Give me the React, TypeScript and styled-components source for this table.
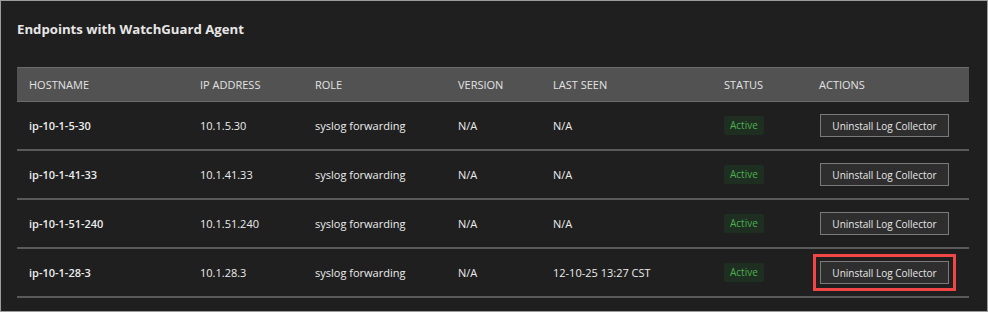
import styled, { createGlobalStyle } from 'styled-components';

type Endpoint = {
  hostname: string;
  ip: string;
  role: string;
  version: string;
  lastSeen: string;
  highlighted?: boolean;
};

const endpoints: Endpoint[] = [
  { hostname: 'ip-10-1-5-30', ip: '10.1.5.30', role: 'syslog forwarding', version: 'N/A', lastSeen: 'N/A' },
  { hostname: 'ip-10-1-41-33', ip: '10.1.41.33', role: 'syslog forwarding', version: 'N/A', lastSeen: 'N/A' },
  { hostname: 'ip-10-1-51-240', ip: '10.1.51.240', role: 'syslog forwarding', version: 'N/A', lastSeen: 'N/A' },
  {
    hostname: 'ip-10-1-28-3',
    ip: '10.1.28.3',
    role: 'syslog forwarding',
    version: 'N/A',
    lastSeen: '12-10-25 13:27 CST',
    highlighted: true,
  },
];

const columns = ['Hostname', 'IP Address', 'Role', 'Version', 'Last Seen', 'Status', 'Actions'];

export default function App() {
  return (
    <>
      <GlobalStyle />
      <Frame>
        <Title>Endpoints with WatchGuard Agent</Title>
        <Table>
          <HeaderRow>
            {columns.map((col) => (
              <HeaderCell key={col}>{col}</HeaderCell>
            ))}
          </HeaderRow>
          {endpoints.map((ep) => (
            <Row key={ep.hostname}>
              <Cell $strong>{ep.hostname}</Cell>
              <Cell>{ep.ip}</Cell>
              <Cell>{ep.role}</Cell>
              <Cell>{ep.version}</Cell>
              <Cell>{ep.lastSeen}</Cell>
              <Cell>
                <StatusBadge>Active</StatusBadge>
              </Cell>
              <Cell>
                <ActionButton type="button" $highlighted={ep.highlighted}>
                  Uninstall Log Collector
                </ActionButton>
              </Cell>
            </Row>
          ))}
        </Table>
      </Frame>
    </>
  );
}

const GlobalStyle = createGlobalStyle`
  body {
    margin: 0;
    background: #1f1f1f;
    font-family: "Open Sans", "Noto Sans", sans-serif;
  }
`;

const Frame = styled.main`
  box-sizing: border-box;
  width: 988px;
  height: 312px;
  padding: 18px 0 0 16px;
  border: 1px solid #9c9c9c;
  background: #1f1f1f;
`;

const Title = styled.h1`
  margin: 0 0 28px;
  color: #e6e6e6;
  font-size: 13.2px;
  font-weight: 700;
  line-height: 20px;
`;

const gridColumns = '171px 115px 143px 95px 171px 95px 162px';

const Table = styled.section`
  display: grid;
  width: 952px;
`;

const HeaderRow = styled.div`
  display: grid;
  grid-template-columns: ${gridColumns};
  align-items: center;
  height: 35px;
  box-sizing: border-box;
  border-top: 1px solid #6b6b6b;
  border-bottom: 1px solid #6b6b6b;
  background: #525252;
`;

const HeaderCell = styled.div`
  padding-left: 12px;
  color: #e2e2e2;
  font-size: 11px;
  text-transform: uppercase;
`;

const Row = styled.div`
  display: grid;
  grid-template-columns: ${gridColumns};
  align-items: center;
  height: 49px;
  box-sizing: border-box;
  border-bottom: 2px solid #5a5a5a;
`;

const Cell = styled.div<{ $strong?: boolean }>`
  padding-left: 12px;
  color: #ececec;
  font-size: 11px;
  font-weight: ${({ $strong }) => ($strong ? 600 : 400)};
`;

const StatusBadge = styled.span`
  display: inline-block;
  padding: 3px 6px;
  border-radius: 2px;
  background: #1e2e21;
  color: #4caf50;
  font-size: 10px;
  line-height: 13px;
`;

const ActionButton = styled.button<{ $highlighted?: boolean }>`
  box-sizing: border-box;
  width: 129px;
  height: 23px;
  margin-left: 1px;
  padding: 0;
  border: 1px solid #7a7a7a;
  background: #2e2e2e;
  color: #e6e6e6;
  font-family: inherit;
  font-size: 10px;
  outline: ${({ $highlighted }) => ($highlighted ? '3px solid #f04646' : 'none')};
  outline-offset: 4px;
`;
